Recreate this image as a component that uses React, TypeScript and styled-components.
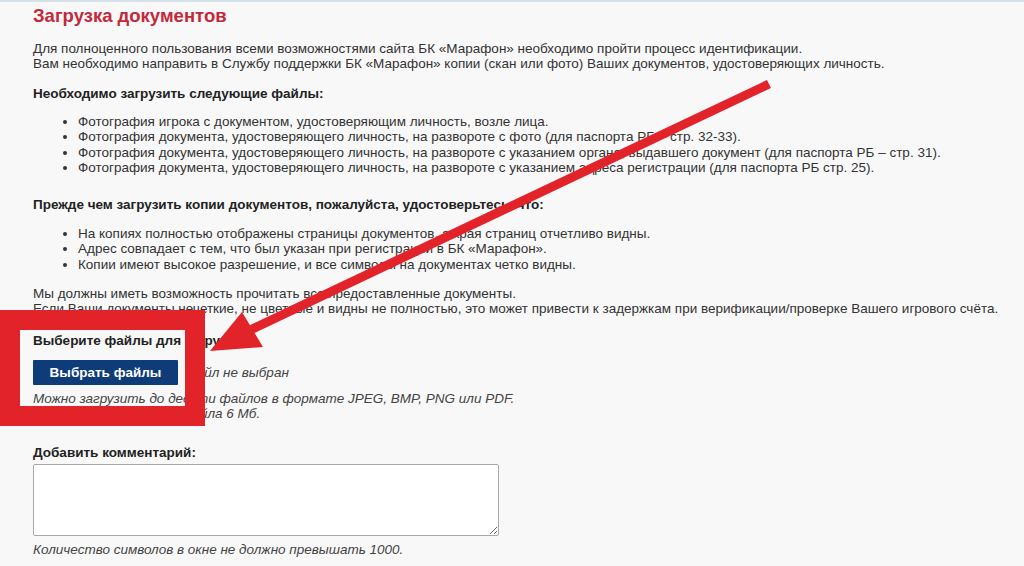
import React from "react";
import styled, { createGlobalStyle } from "styled-components";

const GlobalStyle = createGlobalStyle`
  html, body {
    margin: 0;
    padding: 0;
    background: #f8f8f8;
  }
  body {
    font-family: "Liberation Sans", Arial, sans-serif;
    color: #333333;
  }
`;

const Page = styled.div`
  position: relative;
  width: 1024px;
  height: 566px;
  overflow: hidden;
  box-sizing: border-box;
  border-top: 2px solid #d3e2e9;
  padding: 3px 0 0 33px;
  background: #f8f8f8;
`;

const Title = styled.h1`
  margin: 0;
  font-size: 18.5px;
  line-height: 21px;
  font-weight: 700;
  color: #c4283b;
`;

const Text = styled.p<{ $top?: number }>`
  margin: ${(p) => p.$top ?? 13}px 0 0 0;
  font-size: 13.5px;
  line-height: 15px;
`;

const Heading = styled.h3<{ $top: number }>`
  margin: ${(p) => p.$top}px 0 0 0;
  font-size: 13.5px;
  line-height: 15px;
  font-weight: 700;
  color: #222;
`;

const List = styled.ul<{ $top: number }>`
  margin: ${(p) => p.$top}px 0 0 0;
  padding-left: 45px;
  font-size: 13.5px;
  line-height: 15.3px;
`;

const UploadRow = styled.div`
  display: flex;
  align-items: center;
  gap: 8px;
  margin-top: 12px;
`;

const ChooseButton = styled.button`
  width: 145px;
  height: 25px;
  border: none;
  border-radius: 1px;
  background: #0e3c79;
  color: #ffffff;
  font-family: "Liberation Sans", Arial, sans-serif;
  font-size: 13.5px;
  font-weight: 700;
  cursor: pointer;
`;

const Note = styled.p<{ $top: number }>`
  margin: ${(p) => p.$top}px 0 0 0;
  font-size: 13.5px;
  line-height: 15px;
  font-style: italic;
  color: #444;
`;

const Comment = styled.textarea`
  display: block;
  margin-top: 4px;
  width: 466px;
  height: 72px;
  box-sizing: border-box;
  border: 1px solid #a9a9a9;
  border-radius: 2px;
  background: #ffffff;
  font-family: "Liberation Sans", Arial, sans-serif;
  font-size: 13px;
`;

// red annotation drawn over the page
const Frame = styled.div`
  position: absolute;
  left: 0;
  top: 308px;
  width: 205px;
  height: 116px;
  box-sizing: border-box;
  border: 20px solid #e3232a;
  pointer-events: none;
`;

const ArrowLayer = styled.svg`
  position: absolute;
  left: 0;
  top: 0;
  pointer-events: none;
`;

export default function App() {
  return (
    <>
      <GlobalStyle />
      <Page>
        <Title>Загрузка документов</Title>
        <Text $top={15}>
          Для полноценного пользования всеми возможностями сайта БК «Марафон» необходимо пройти процесс идентификации.
          <br />
          Вам необходимо направить в Службу поддержки БК «Марафон» копии (скан или фото) Ваших документов, удостоверяющих личность.
        </Text>

        <Heading $top={15}>Необходимо загрузить следующие файлы:</Heading>
        <List $top={13}>
          <li>Фотография игрока с документом, удостоверяющим личность, возле лица.</li>
          <li>Фотография документа, удостоверяющего личность, на развороте с фото (для паспорта РБ – стр. 32-33).</li>
          <li>Фотография документа, удостоверяющего личность, на развороте с указанием органа, выдавшего документ (для паспорта РБ – стр. 31).</li>
          <li>Фотография документа, удостоверяющего личность, на развороте с указанием адреса регистрации (для паспорта РБ стр. 25).</li>
        </List>

        <Heading $top={22}>Прежде чем загрузить копии документов, пожалуйста, удостоверьтесь, что:</Heading>
        <List $top={14}>
          <li>На копиях полностью отображены страницы документов, а края страниц отчетливо видны.</li>
          <li>Адрес совпадает с тем, что был указан при регистрации в БК «Марафон».</li>
          <li>Копии имеют высокое разрешение, и все символы на документах четко видны.</li>
        </List>

        <Text $top={14}>
          Мы должны иметь возможность прочитать все предоставленные документы.
          <br />
          Если Ваши документы нечеткие, не цветные и видны не полностью, это может привести к задержкам при верификации/проверке Вашего игрового счёта.
        </Text>

        <Heading $top={17}>Выберите файлы для загрузки:</Heading>
        <UploadRow>
          <ChooseButton>Выбрать файлы</ChooseButton>
          <Note $top={0}>Файл не выбран</Note>
        </UploadRow>
        <Note $top={6}>
          Можно загрузить до десяти файлов в формате JPEG, BMP, PNG или PDF.
          <br />
          Максимальный размер файла 6 Мб.
        </Note>

        <Heading $top={24}>Добавить комментарий:</Heading>
        <Comment />
        <Note $top={6}>Количество символов в окне не должно превышать 1000.</Note>

        <Frame />
        <ArrowLayer width="1024" height="566" viewBox="0 0 1024 566">
          <line x1="769" y1="82" x2="248" y2="329" stroke="#e3232a" strokeWidth="9" />
          <polygon points="242,310 263,345 210,349" fill="#e3232a" />
        </ArrowLayer>
      </Page>
    </>
  );
}
